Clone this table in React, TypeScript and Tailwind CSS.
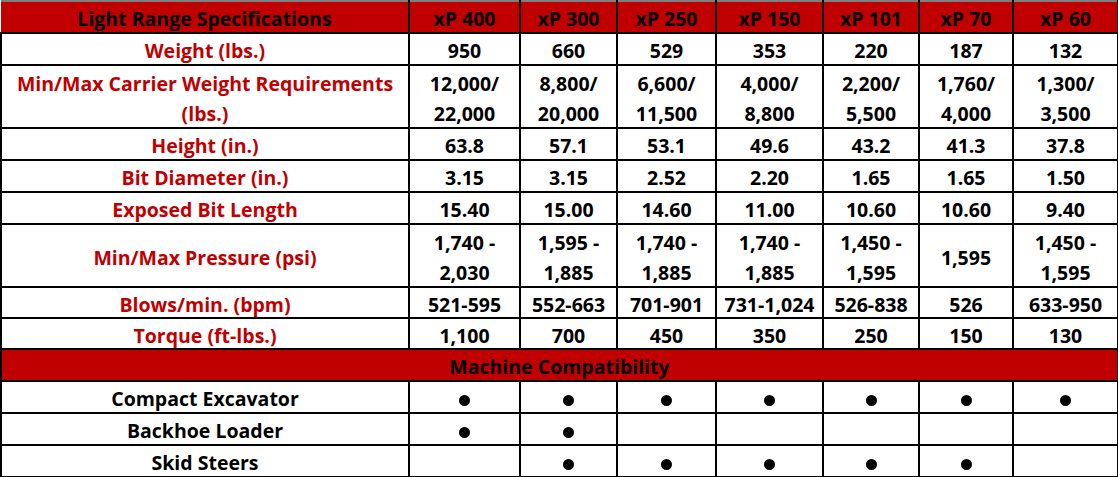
const models = ["xP 400", "xP 300", "xP 250", "xP 150", "xP 101", "xP 70", "xP 60"];

type SpecRow = {
  label: string[];
  values: string[][];
  height: string;
};

const specRows: SpecRow[] = [
  {
    label: ["Weight (lbs.)"],
    values: [["950"], ["660"], ["529"], ["353"], ["220"], ["187"], ["132"]],
    height: "h-[32px]",
  },
  {
    label: ["Min/Max Carrier Weight Requirements", "(lbs.)"],
    values: [
      ["12,000/", "22,000"],
      ["8,800/", "20,000"],
      ["6,600/", "11,500"],
      ["4,000/", "8,800"],
      ["2,200/", "5,500"],
      ["1,760/", "4,000"],
      ["1,300/", "3,500"],
    ],
    height: "h-[63px]",
  },
  {
    label: ["Height (in.)"],
    values: [["63.8"], ["57.1"], ["53.1"], ["49.6"], ["43.2"], ["41.3"], ["37.8"]],
    height: "h-[32px]",
  },
  {
    label: ["Bit Diameter (in.)"],
    values: [["3.15"], ["3.15"], ["2.52"], ["2.20"], ["1.65"], ["1.65"], ["1.50"]],
    height: "h-[32px]",
  },
  {
    label: ["Exposed Bit Length"],
    values: [["15.40"], ["15.00"], ["14.60"], ["11.00"], ["10.60"], ["10.60"], ["9.40"]],
    height: "h-[32px]",
  },
  {
    label: ["Min/Max Pressure (psi)"],
    values: [
      ["1,740 -", "2,030"],
      ["1,595 -", "1,885"],
      ["1,740 -", "1,885"],
      ["1,740 -", "1,885"],
      ["1,450 -", "1,595"],
      ["1,595"],
      ["1,450 -", "1,595"],
    ],
    height: "h-[63px]",
  },
  {
    label: ["Blows/min. (bpm)"],
    values: [["521-595"], ["552-663"], ["701-901"], ["731-1,024"], ["526-838"], ["526"], ["633-950"]],
    height: "h-[31px]",
  },
  {
    label: ["Torque (ft-lbs.)"],
    values: [["1,100"], ["700"], ["450"], ["350"], ["250"], ["150"], ["130"]],
    height: "h-[31px]",
  },
];

const machines: { name: string; fits: boolean[] }[] = [
  { name: "Compact Excavator", fits: [true, true, true, true, true, true, true] },
  { name: "Backhoe Loader", fits: [true, true, false, false, false, false, false] },
  { name: "Skid Steers", fits: [false, true, true, true, true, true, false] },
];

const cell = "border-2 border-black text-center align-middle p-0 whitespace-nowrap";

function Lines({ lines }: { lines: string[] }) {
  return (
    <div className={`translate-y-[2px] ${lines.length > 1 ? "leading-[30px]" : "leading-[26px]"}`}>
      {lines.map((line) => (
        <div key={line}>{line}</div>
      ))}
    </div>
  );
}

export default function App() {
  return (
    <div
      className="w-[1118px] h-[477px] overflow-hidden bg-white text-[19.5px] font-bold text-black"
      style={{ fontFamily: "'Open Sans', Lato, sans-serif" }}
    >
      <table className="w-[1117px] table-fixed border-collapse border-t-2 border-t-[#7f7f7f]">
        <colgroup>
          <col className="w-[408px]" />
          <col className="w-[111px]" />
          <col className="w-[97px]" />
          <col className="w-[99px]" />
          <col className="w-[107px]" />
          <col className="w-[96px]" />
          <col className="w-[94px]" />
          <col className="w-[105px]" />
        </colgroup>
        <thead>
          <tr className="h-[32px] bg-[#c00000]">
            <th className={`${cell} border-t-[#7f7f7f] border-l-0`}>
              <Lines lines={["Light Range Specifications"]} />
            </th>
            {models.map((model) => (
              <th className={`${cell} border-t-[#7f7f7f]`} key={model}>
                <Lines lines={[model]} />
              </th>
            ))}
          </tr>
        </thead>
        <tbody>
          {specRows.map((row) => (
            <tr className={row.height} key={row.label[0]}>
              <td className={`${cell} text-[#c00000]`}>
                <Lines lines={row.label} />
              </td>
              {row.values.map((value, i) => (
                <td className={cell} key={i}>
                  <Lines lines={value} />
                </td>
              ))}
            </tr>
          ))}
          <tr className="h-[32px] bg-[#c00000]">
            <td className={cell} colSpan={8}>
              <Lines lines={["Machine Compatibility"]} />
            </td>
          </tr>
          {machines.map((machine) => (
            <tr className="h-[32px]" key={machine.name}>
              <td className={cell}>
                <Lines lines={[machine.name]} />
              </td>
              {machine.fits.map((fit, i) => (
                <td className={cell} key={i}>
                  {fit ? (
                    <span className="inline-block h-[11px] w-[11px] translate-y-[1px] rounded-full bg-black align-middle" />
                  ) : null}
                </td>
              ))}
            </tr>
          ))}
        </tbody>
      </table>
    </div>
  );
}
